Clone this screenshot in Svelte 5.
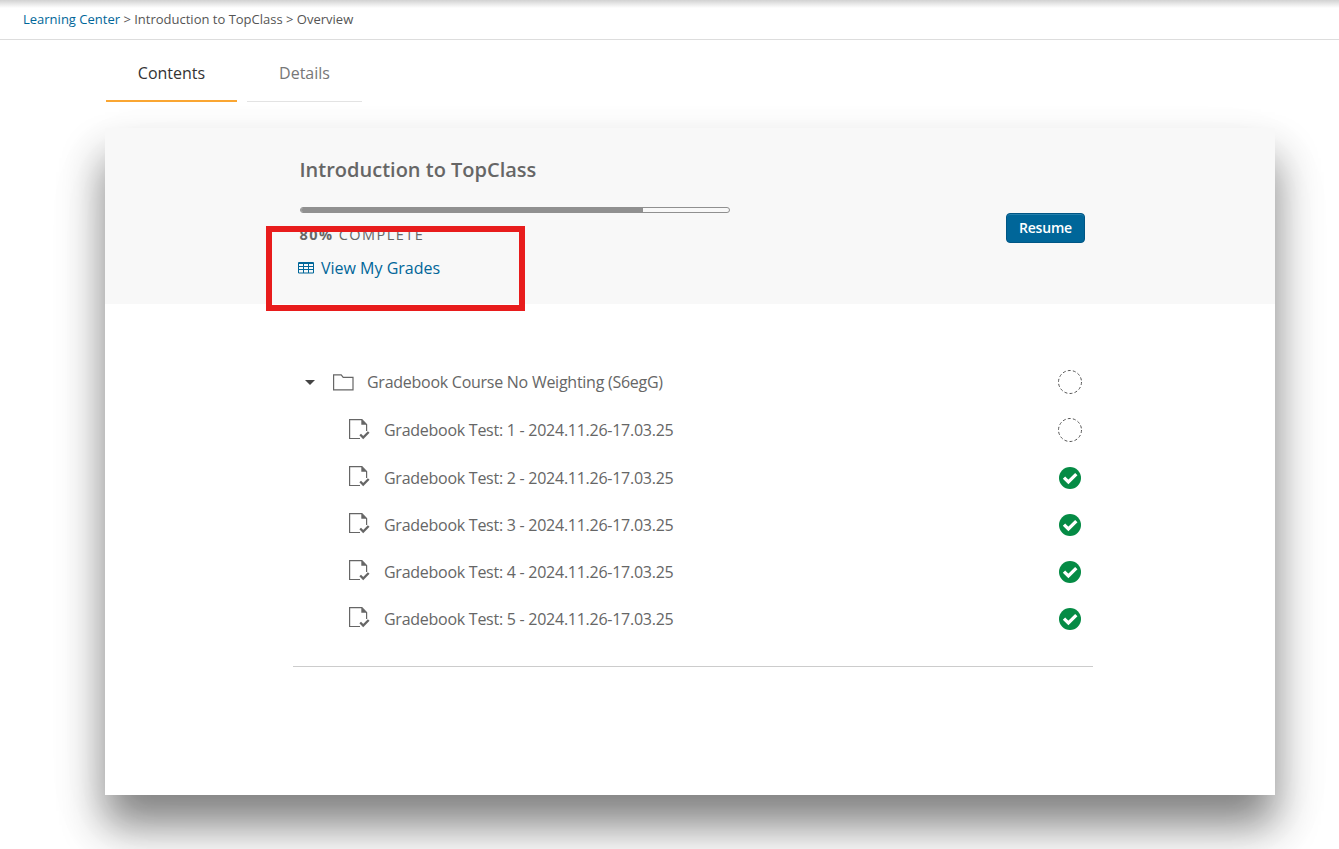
<script>
  const course = {
    title: 'Introduction to TopClass',
    percent: 80
  };

  const folder = 'Gradebook Course No Weighting (S6egG)';

  const tests = [
    { name: 'Gradebook Test: 1 - 2024.11.26-17.03.25', complete: false },
    { name: 'Gradebook Test: 2 - 2024.11.26-17.03.25', complete: true },
    { name: 'Gradebook Test: 3 - 2024.11.26-17.03.25', complete: true },
    { name: 'Gradebook Test: 4 - 2024.11.26-17.03.25', complete: true },
    { name: 'Gradebook Test: 5 - 2024.11.26-17.03.25', complete: true }
  ];

  let activeTab = $state('Contents');
  let expanded = $state(true);
</script>

{#snippet status(complete)}
  <span class="status">
    {#if complete}
      <svg width="22" height="22" viewBox="0 0 22 22" role="img" aria-label="Complete">
        <circle cx="11" cy="11" r="11" fill="#058b45" />
        <path d="M5 10.6l4.4 4.4 7.9-7.9" fill="none" stroke="#fff" stroke-width="3.3" />
      </svg>
    {:else}
      <svg width="24" height="24" viewBox="0 0 24 24" role="img" aria-label="Not started">
        <circle cx="12" cy="12" r="11.5" fill="none" stroke="#555" stroke-dasharray="3 2.16" />
      </svg>
    {/if}
  </span>
{/snippet}

<nav class="breadcrumb">
  <a href="#home">Learning Center</a> &gt; <span>{course.title}</span> &gt; <span>Overview</span>
</nav>

<div class="tabs" role="tablist">
  {#each ['Contents', 'Details'] as tab}
    <button
      class="tab"
      class:active={activeTab === tab}
      role="tab"
      aria-selected={activeTab === tab}
      onclick={() => (activeTab = tab)}
    >
      {tab}
    </button>
  {/each}
</div>

<main class="card">
  <header class="course-header">
    <div class="course-info">
      <h1>{course.title}</h1>
      <div class="progress">
        <div class="progress-fill" style="width: {course.percent}%"></div>
      </div>
      <p class="progress-label"><b>{course.percent}%</b> COMPLETE</p>
      <a class="grades" href="#grades">
        <svg width="17" height="12" viewBox="0 0 17 12" fill="none" stroke="#006699">
          <path d="M.5 .5h15v10.5H.5z M.5 1.5h15 M.5 4.5h15 M.5 7.5h15 M5.5 1v10 M10.5 1v10" />
        </svg>
        View My Grades
      </a>
      <div class="highlight"></div>
    </div>
    <button class="resume">Resume</button>
  </header>

  <section class="outline">
    <div class="row folder">
      <button class="toggle" aria-label="Toggle folder" onclick={() => (expanded = !expanded)}>
        <svg width="10" height="5" viewBox="0 0 10 5"><path d="M0 0h10L5 5z" fill="#444" /></svg>
      </button>
      <svg class="folder-icon" width="21" height="17" viewBox="0 0 21 17" fill="none" stroke="#666" stroke-width="1.2">
        <path d="M.6 15.8V.8h7.6l2 2.5h9.8v12.5z" />
      </svg>
      <span class="name">{folder}</span>
      {@render status(false)}
    </div>
    {#if expanded}
      {#each tests as test}
        <div class="row test">
          <svg class="test-icon" width="21" height="21" viewBox="0 0 21 21" fill="none" stroke="#666" stroke-width="1.2">
            <path d="M11 19.5H.6V.6h12.3l4.7 4.8v6.5" />
            <path d="M12.3 .3v5.5h5.5z" fill="#666" stroke="none" />
            <path d="M11.2 15.5l3 3.1 5.5-5.6" stroke-width="2.3" />
          </svg>
          <span class="name">{test.name}</span>
          {@render status(test.complete)}
        </div>
      {/each}
    {/if}
  </section>
</main>

<style>
  :global(body) {
    height: 849px;
    overflow: hidden;
    background: #fff;
    color: #666;
    font-family: 'Open Sans', 'Noto Sans', sans-serif;
    font-size: 16px;
  }

  a {
    color: #069;
    text-decoration: none;
  }

  button {
    padding: 0;
    border: 0;
    background: none;
    color: inherit;
    font: inherit;
    cursor: pointer;
  }

  svg {
    display: block;
    flex: none;
  }

  .breadcrumb {
    box-sizing: border-box;
    height: 40px;
    padding-left: 23px;
    border-bottom: 1px solid #ddd;
    background: linear-gradient(#d2d2d2, #fff 8px);
    color: #555;
    font-size: 13px;
    line-height: 39px;
  }

  .tabs {
    display: flex;
    align-items: flex-start;
    gap: 10px;
    height: 88px;
    padding-left: 106px;
  }

  .tab {
    box-sizing: border-box;
    width: 115px;
    height: 62px;
    padding-top: 6px;
    border-bottom: 1px solid #e3e3e3;
    color: #777;
    line-height: 55px;
  }

  .tab.active {
    width: 131px;
    border-bottom: 2px solid #faa632;
    color: #333;
  }

  .card {
    width: 1170px;
    height: 667px;
    margin-left: 105px;
    background: #fff;
    box-shadow:
      0 30px 40px rgba(0, 0, 0, 0.47),
      0 30px 70px rgba(0, 0, 0, 0.05);
  }

  .course-header {
    display: flex;
    justify-content: space-between;
    box-sizing: border-box;
    height: 176px;
    padding: 28px 190px 0 195px;
    background: #f8f8f8;
  }

  .course-info {
    position: relative;
    width: 430px;
  }

  h1 {
    margin: 0 0 0 -0.5px;
    font-size: 20px;
    font-weight: 600;
    line-height: 28px;
  }

  .progress {
    box-sizing: border-box;
    height: 6px;
    margin-top: 23px;
    border: 1px solid #909090;
    border-radius: 3px;
    overflow: hidden;
  }

  .progress-fill {
    height: 100%;
    background: #909090;
  }

  .progress-label {
    margin: 12px 0 0 -0.5px;
    font-size: 14.5px;
    line-height: 20px;
    letter-spacing: 1.45px;
  }

  .grades {
    display: flex;
    align-items: center;
    gap: 6px;
    margin: 11px 0 0 -2px;
    line-height: 24px;
  }

  /* callout frame drawn over the grades link */
  .highlight {
    position: absolute;
    top: 70px;
    left: -34px;
    box-sizing: border-box;
    width: 259px;
    height: 85px;
    border: 6px solid #e81c1c;
    pointer-events: none;
  }

  .resume {
    box-sizing: border-box;
    width: 79px;
    height: 30px;
    margin-top: 57px;
    padding-bottom: 2px;
    border: 1px solid #005685;
    border-radius: 4px;
    background: #069;
    box-shadow: inset 0 1px 0 #2380ad;
    color: #fff;
    font-size: 14px;
    font-weight: 600;
    letter-spacing: -0.2px;
  }

  .outline {
    display: flex;
    flex-direction: column;
    box-sizing: border-box;
    width: 800px;
    height: 363px;
    margin-left: 188px;
    padding-top: 54px;
    border-bottom: 1px solid #ccc;
  }

  .row {
    display: flex;
    align-items: center;
    height: 47px;
    padding-right: 11px;
  }

  .row.folder,
  .row.folder + .row {
    height: 48px;
  }

  .toggle {
    margin: 0 18px 0 12px;
  }

  .folder-icon {
    margin-right: 13px;
  }

  .test-icon {
    margin: 0 14px 2px 56px;
  }

  .name {
    flex: 1;
    letter-spacing: -0.26px;
  }

  .status {
    display: flex;
    justify-content: center;
    width: 24px;
  }
</style>
